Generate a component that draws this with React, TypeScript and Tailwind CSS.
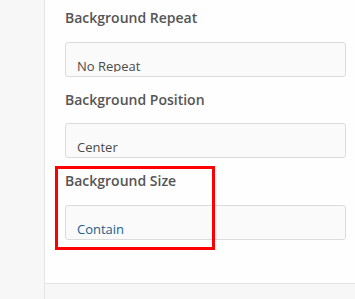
import React from "react";

type Field = {
  label: string;
  value: string;
  active?: boolean;
};

const fields: Field[] = [
  { label: "Background Repeat", value: "No Repeat" },
  { label: "Background Position", value: "Center" },
  { label: "Background Size", value: "Contain", active: true },
];

const App = () => {
  return (
    <div
      className="relative flex h-[299px] w-[355px] overflow-hidden bg-[#f7f7f7]"
      style={{ fontFamily: '"Open Sans", "Noto Sans", sans-serif' }}
    >
      {/* left rail */}
      <div className="w-[45px] shrink-0 border-r border-[#e5e5e5] bg-[#f7f7f7]" />

      <div className="flex flex-1 flex-col">
        <div className="flex h-[284px] flex-col gap-[13px] border-b border-[#e5e5e5] bg-[#fefefe] pl-[20px] pr-[9px] pt-[8px]">
          {fields.map((field) => (
            <div key={field.label} className="flex flex-col">
              <h3 className="text-[14px] font-semibold leading-[20px] text-[#555]">
                {field.label}
              </h3>
              <div className="mt-[13.5px] h-[35px] rounded-[3px] border border-[#dcdcdc] bg-[#fafafa] pl-[11px] pt-[13px]">
                <div
                  className={`h-[16px] overflow-hidden text-[13px] leading-[20px] ${
                    field.active ? "text-[#1b5e8c]" : "text-[#4a4a4a]"
                  }`}
                >
                  {field.value}
                </div>
              </div>
            </div>
          ))}
        </div>
        <div className="flex-1 bg-[#f7f7f7]" />
      </div>

      {/* highlight annotation */}
      <div className="pointer-events-none absolute left-[55px] top-[166px] h-[84px] w-[160px] border-[3px] border-[#ff0000]" />
    </div>
  );
};

export default App;
